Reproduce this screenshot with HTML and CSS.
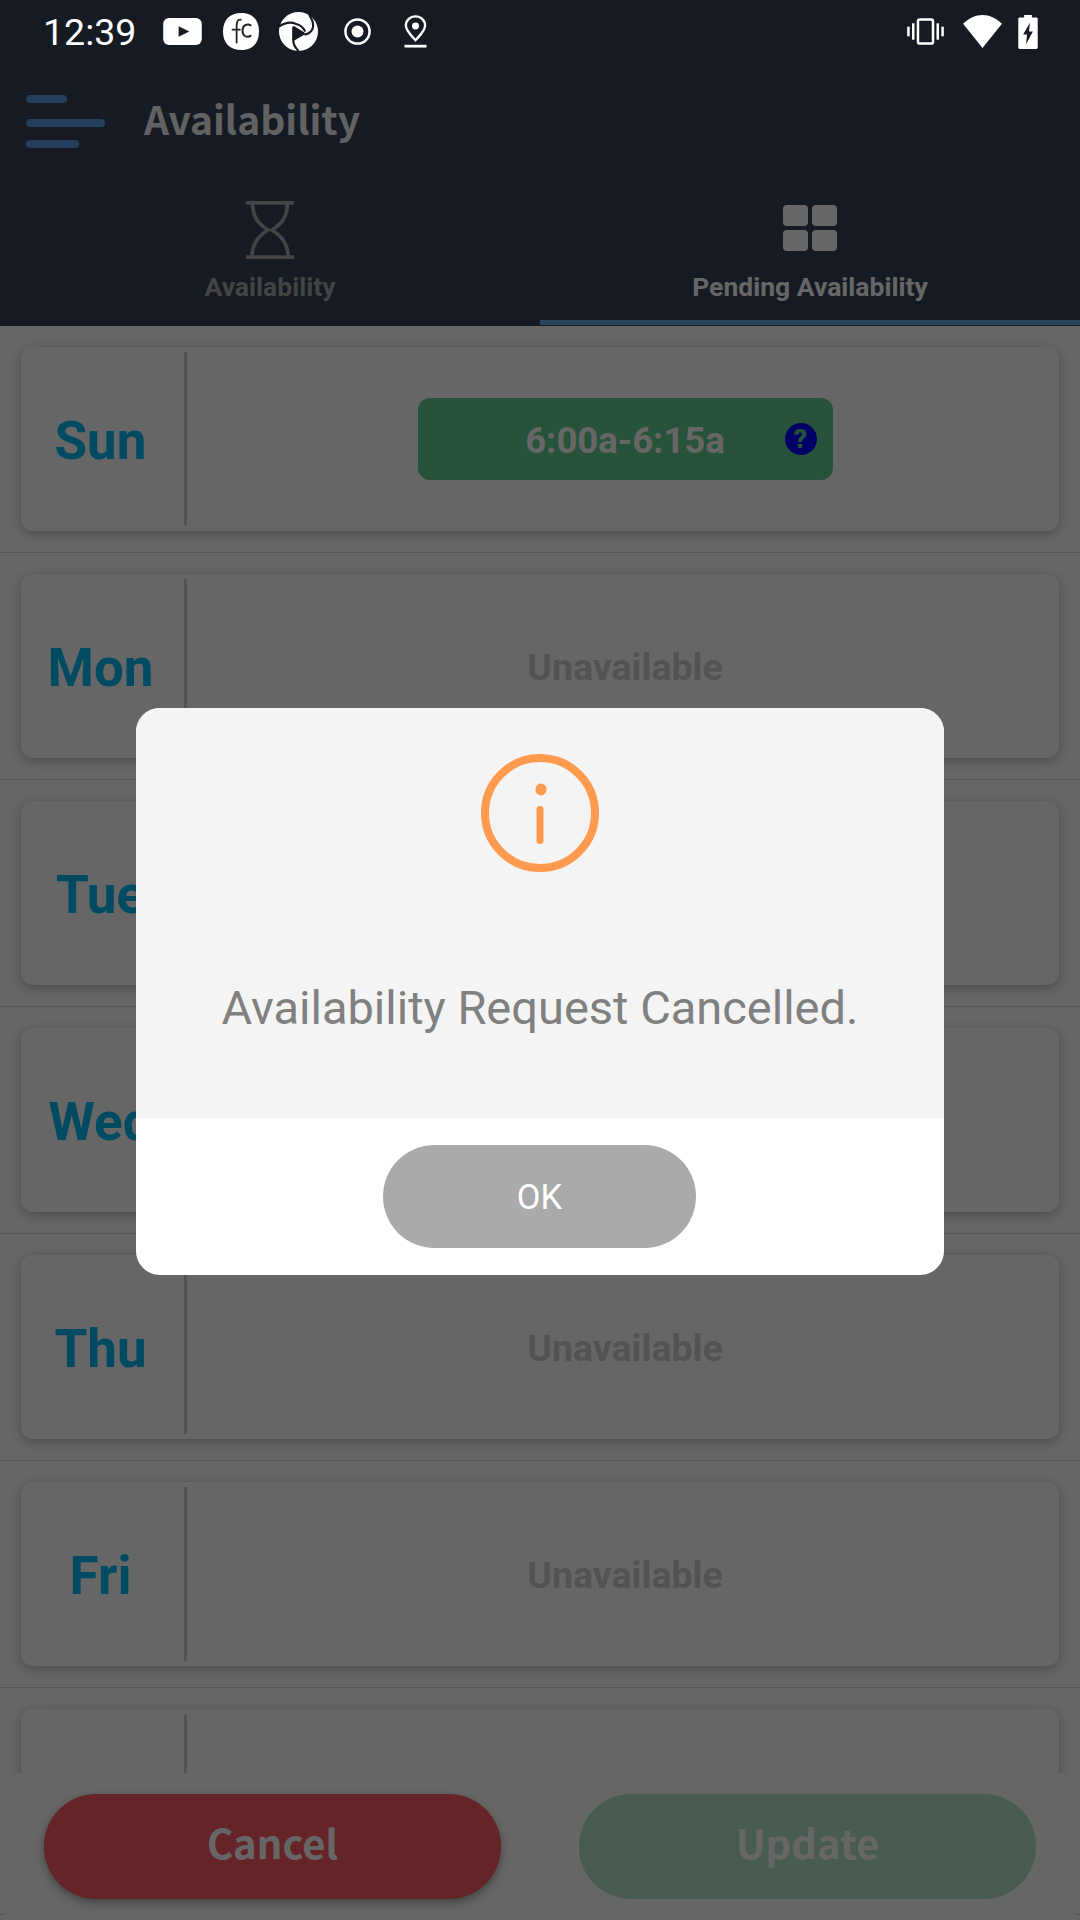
FILE: index.html
```html
<!DOCTYPE html>
<html lang="en">
<head>
<meta charset="utf-8">
<title>Availability</title>
<link rel="stylesheet" href="styles.css">
</head>
<body>
<div class="app">
  <header class="header">
    <div class="statusbar">
      <div class="status-left">
        <span class="clock">12:39</span>
        <svg class="ic-yt" viewBox="0 0 40 28"><rect width="40" height="28" rx="6" fill="#fff"/><path d="M16 8.500 L27 14 L16 19.500Z" fill="#161a22"/></svg>
        <svg class="ic-fc" viewBox="0 0 38 38"><path d="M19 0C30 0 37 7 37 19C37 31 30 38 19 38C7 38 0 31 0 19C0 7 7 0 19 0Z" fill="#fff"/><path d="M19 7C15 6 14 9 14 14V31M9 17H18" fill="none" stroke="#222" stroke-width="1.800"/><path d="M29 13C25 10 20 13 20 18C20 24 25 26 29 23" fill="none" stroke="#222" stroke-width="2"/></svg>
        <svg class="ic-sh" viewBox="0 0 40 40"><circle cx="20" cy="20" r="20" fill="#fff"/><path d="M15 16L25 22L15 28Z" fill="#161a22" stroke="#161a22" stroke-width="3" stroke-linejoin="round"/><path d="M0 15C6 11 12 10 17 12C21 13 25 16 27 20M31 3C35 9 36 14 34 18C32 21 29 23 26 23M15 27C14 31 16 36 20 40" fill="none" stroke="#161a22" stroke-width="2.200"/></svg>
        <svg class="ic-rec" viewBox="0 0 28 28"><circle cx="14" cy="14" r="12.500" fill="none" stroke="#fff" stroke-width="2.600"/><circle cx="14" cy="14" r="6.200" fill="#fff"/></svg>
        <svg class="ic-pin" viewBox="0 0 24 36"><path d="M12 1.500C6 1.500 1.500 6 1.500 11.500C1.500 17.500 8 23 12 27.500C16 23 22.500 17.500 22.500 11.500C22.500 6 18 1.500 12 1.500Z" fill="none" stroke="#fff" stroke-width="2.600"/><circle cx="12" cy="12" r="3.800" fill="#fff"/><rect x="0" y="32.500" width="24" height="3" fill="#fff"/></svg>
      </div>
      <div class="status-right">
        <svg class="ic-vib" viewBox="0 0 38 28"><rect x="11.200" y="1.500" width="15.600" height="25" rx="2" fill="none" stroke="#fff" stroke-width="2.600"/><rect x="0" y="9" width="2.600" height="10" fill="#fff"/><rect x="5" y="5.500" width="2.600" height="17" fill="#fff"/><rect x="30.400" y="5.500" width="2.600" height="17" fill="#fff"/><rect x="35.400" y="9" width="2.600" height="10" fill="#fff"/></svg>
        <svg class="ic-wifi" viewBox="0 0 40 34"><path d="M0 9C6 3 13 0 20 0C27 0 34 3 40 9L20 34Z" fill="#fff"/></svg>
        <svg class="ic-bat" viewBox="0 0 20 35"><path d="M6 0H14V2.500H18.500C19.400 2.500 20 3.100 20 4V33.500C20 34.400 19.400 35 18.500 35H1.500C.6 35 0 34.400 0 33.500V4C0 3.100 .6 2.500 1.500 2.500H6Z" fill="#fff"/><path d="M12 8L5 20H9L8 30L15 17H11Z" fill="#161a22"/></svg>
      </div>
    </div>
    <div class="titlebar">
      <div class="menu"><span class="menu-a"></span><span class="menu-b"></span><span class="menu-c"></span></div>
      <h1 class="title">Availability</h1>
    </div>
    <nav class="tabs">
      <div class="tab">
        <svg class="ic-hour" viewBox="0 0 50 60"><path d="M0 2H50M0 58H50M7 2C7 16 12 23 23 30C12 37 7 44 6 58M43 2C43 16 38 23 27 30C38 37 43 44 44 58" fill="none" stroke="currentColor" stroke-width="3.800"/></svg>
        <span class="tab-label">Availability</span>
      </div>
      <div class="tab tab-on">
        <div class="grid-ic"><span></span><span></span><span></span><span></span></div>
        <span class="tab-label">Pending Availability</span>
      </div>
    </nav>
  </header>
  <main class="list">
    <section class="row"><div class="card"><div class="day">Sun</div><div class="slot">
      <div class="pill"><span class="pill-text">6:00a-6:15a</span><span class="q">?</span></div>
    </div></div></section>
    <section class="row"><div class="card"><div class="day">Mon</div><div class="slot"><span class="un">Unavailable</span></div></div></section>
    <section class="row"><div class="card"><div class="day">Tue</div><div class="slot"><span class="un">Unavailable</span></div></div></section>
    <section class="row"><div class="card"><div class="day">Wed</div><div class="slot"><span class="un">Unavailable</span></div></div></section>
    <section class="row"><div class="card"><div class="day">Thu</div><div class="slot"><span class="un">Unavailable</span></div></div></section>
    <section class="row"><div class="card"><div class="day">Fri</div><div class="slot"><span class="un">Unavailable</span></div></div></section>
    <section class="row"><div class="card"><div class="day">Sat</div><div class="slot"><span class="un">Unavailable</span></div></div></section>
  </main>
  <footer class="actions">
    <button class="btn btn-cancel">Cancel</button>
    <button class="btn btn-update">Update</button>
  </footer>
  <div class="scrim">
    <div class="dialog">
      <div class="dialog-body">
        <svg class="ic-info" viewBox="0 0 118 118"><circle cx="59" cy="59" r="55" fill="none" stroke="#ff9a4e" stroke-width="8"/><ellipse cx="60" cy="35.500" rx="5.500" ry="6" fill="#ff9a4e"/><rect x="55.500" y="52" width="7" height="38" rx="3.500" fill="#ff9a4e"/></svg>
        <p class="msg">Availability Request Cancelled.</p>
      </div>
      <div class="dialog-foot"><button class="ok">OK</button></div>
    </div>
  </div>
</div>
</body>
</html>
```
FILE: styles.css
```css
* { box-sizing: border-box; }
html, body { margin: 0; padding: 0; }
body { font-family: Roboto, sans-serif; background: #fff; }
.app { position: relative; width: 1080px; height: 1920px; overflow: hidden; display: flex; flex-direction: column; background: #fff; }

.header { height: 326px; flex: none; background: #374155; display: flex; flex-direction: column; }
.statusbar { position: relative; z-index: 5; height: 63px; flex: none; display: flex; justify-content: space-between; align-items: center; padding: 0 42px 0 43px; }
.status-left, .status-right { display: flex; align-items: center; }
.clock { color: #fff; font-size: 37.500px; line-height: 63px; width: 120px; padding-top: 1px; }
.ic-yt { width: 39px; height: 27px; margin-right: 21px; }
.ic-fc { width: 37px; height: 37px; margin-right: 19px; }
.ic-sh { width: 39px; height: 39px; margin-right: 26px; }
.ic-rec { width: 27px; height: 27px; margin-right: 33px; }
.ic-pin { width: 23px; height: 33px; }
.ic-vib { width: 37px; height: 27px; margin-right: 19px; }
.ic-wifi { width: 39px; height: 33px; margin-right: 16px; }
.ic-bat { width: 20px; height: 34px; }

.titlebar { height: 111px; flex: none; display: flex; align-items: center; padding-left: 26px; }
.menu { width: 80px; margin-top: 6px; display: flex; flex-direction: column; align-items: flex-start; }
.menu span { display: block; height: 8px; border-radius: 4px; background: #5a9ee6; }
.menu-a { width: 41px; margin-bottom: 16px; }
.menu-b { width: 79px; margin-bottom: 13px; }
.menu-c { width: 53px; }
.title { margin: 0 0 2px 38px; color: #f4f4f4; font-family: "Noto Sans CJK SC", "Noto Sans", sans-serif; font-weight: 700; font-size: 39px; line-height: 98px; }

.tabs { flex: 1; display: flex; }
.tab { width: 540px; color: #aaa; display: flex; flex-direction: column; align-items: center; padding-top: 27px; position: relative; }
.tab-on { color: #fff; }
.tab-on::after { content: ""; position: absolute; left: 0; right: 0; bottom: 1px; height: 5px; background: #6aa8e6; }
.ic-hour { width: 50px; height: 58px; display: block; }
.tab-label { font-weight: 700; font-size: 26.500px; line-height: 32px; margin-top: 12px; }
.grid-ic { width: 54px; height: 46px; margin: 4px 0 8px; display: grid; grid-template-columns: 25px 25px; grid-template-rows: 21px 21px; gap: 4px; }
.grid-ic span { background: #fff; border-radius: 4px; }

.list { flex: 1; overflow: hidden; background: #fff; }
.row { height: 227px; padding: 21px; border-bottom: 1px solid #d6d6d6; }
.card { height: 184px; background: #fff; border-radius: 12px; box-shadow: 0 3px 12px rgba(0,0,0,.28); display: flex; padding: 5px 0; }
.day { width: 166px; flex: none; padding: 4px 4px 0 0; border-right: 3px solid #d0d0d0; display: flex; align-items: center; justify-content: center; color: #00b9f5; font-weight: 700; font-size: 53px; }
.slot { flex: 1; display: flex; align-items: center; justify-content: center; padding-left: 4px; }
.pill { position: relative; width: 415px; height: 82px; background: #62ce94; border-radius: 12px; display: flex; align-items: center; justify-content: center; }
.pill-text { color: #fff; font-weight: 700; font-size: 36.500px; padding-top: 2px; }
.q { position: absolute; right: 16px; top: 25px; width: 32px; height: 32px; border-radius: 50%; background: #0000ff; color: #62ce94; font-weight: 900; font-size: 26px; line-height: 32px; text-align: center; }
.un { color: #cecece; font-weight: 700; font-size: 37.500px; padding-top: 2px; }

.actions { position: absolute; left: 5px; right: 5px; bottom: 0; height: 147px; background: #fff; display: flex; justify-content: space-between; padding: 21px 39px 0; }
.btn { width: 457px; height: 105px; border: 0; border-radius: 52px; color: #fff; font-family: "Noto Sans CJK SC", "Noto Sans", sans-serif; font-weight: 700; font-size: 40px; padding: 0 0 10px; }
.btn-cancel { background: #fa5a64; box-shadow: 0 4px 10px rgba(0,0,0,.35); }
.btn-update { background: #b4e4c8; }

.scrim { position: absolute; inset: 0; z-index: 3; background: rgba(0,0,0,.6); display: flex; justify-content: center; padding-top: 708px; }
.dialog { width: 808px; height: 567px; border-radius: 24px; overflow: hidden; display: flex; flex-direction: column; background: #fff; }
.dialog-body { height: 410px; background: #f4f4f4; display: flex; flex-direction: column; align-items: center; padding-top: 46px; }
.ic-info { width: 118px; height: 118px; display: block; }
.msg { margin: 106px 0 0; color: #808080; font-size: 47px; line-height: 60px; white-space: nowrap; }
.dialog-foot { flex: 1; display: flex; align-items: center; justify-content: center; }
.ok { width: 313px; height: 103px; margin-right: 1px; border: 0; border-radius: 52px; background: #aaa; color: #fff; font-family: Roboto, sans-serif; font-size: 34.500px; }
```
